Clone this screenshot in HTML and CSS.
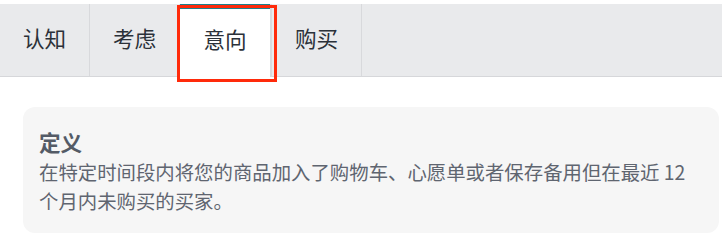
FILE: index.html
```html
<!DOCTYPE html>
<html lang="zh-CN">
<head>
<meta charset="utf-8">
<link rel="stylesheet" href="styles.css">
</head>
<body>
<div class="page">
  <nav class="tabs">
    <div class="tab">认知</div>
    <div class="tab">考虑</div>
    <div class="tab active">意向</div>
    <div class="tab">购买</div>
  </nav>
  <div class="highlight"></div>
  <section class="card">
    <h3 class="card-title">定义</h3>
    <p class="card-text">在特定时间段内将您的商品加入了购物车、心愿单或者保存备用但在最近 12 个月内未购买的买家。</p>
  </section>
</div>
</body>
</html>
```

FILE: styles.css
```css
html, body {
  margin: 0;
  padding: 0;
  background: #ffffff;
}
body {
  font-family: "Noto Sans", "Noto Sans CJK SC", sans-serif;
  width: 722px;
  height: 234px;
  overflow: hidden;
}
.page {
  position: relative;
  padding-top: 4px;
}
.tabs {
  display: flex;
  height: 72px;
  background: #e9eaec;
  border-bottom: 1px solid #d6d7da;
}
.tab {
  width: 90px;
  border-right: 1px solid #d8d9dc;
  display: flex;
  align-items: center;
  justify-content: center;
  padding-bottom: 5px;
  box-sizing: border-box;
  font-size: 21.6px;
  color: #2b3139;
  font-family: "Noto Sans CJK SC", sans-serif;
}
.tab.active {
  width: 92px;
  background: #ffffff;
  box-shadow: inset 0 5px 0 #1e7f8a;
  border-right: 2px solid #d9dadd;
  height: 73px;
  margin-bottom: -1px;
}
.highlight {
  position: absolute;
  left: 177px;
  top: 5px;
  width: 94px;
  height: 71px;
  border: 3px solid #ff2a0a;
  pointer-events: none;
}
.card {
  margin: 30px 3px 0 23px;
  background: #f6f6f6;
  border-radius: 12px;
  padding: 20px 30px 18px 16px;
  font-family: "Noto Sans CJK SC", sans-serif;
}
.card-title {
  margin: 0;
  font-size: 21.6px;
  line-height: 30px;
  font-weight: 700;
  color: #545b66;
}
.card-text {
  margin: 0;
  font-size: 19.4px;
  line-height: 29px;
  color: #5f6570;
}
```
